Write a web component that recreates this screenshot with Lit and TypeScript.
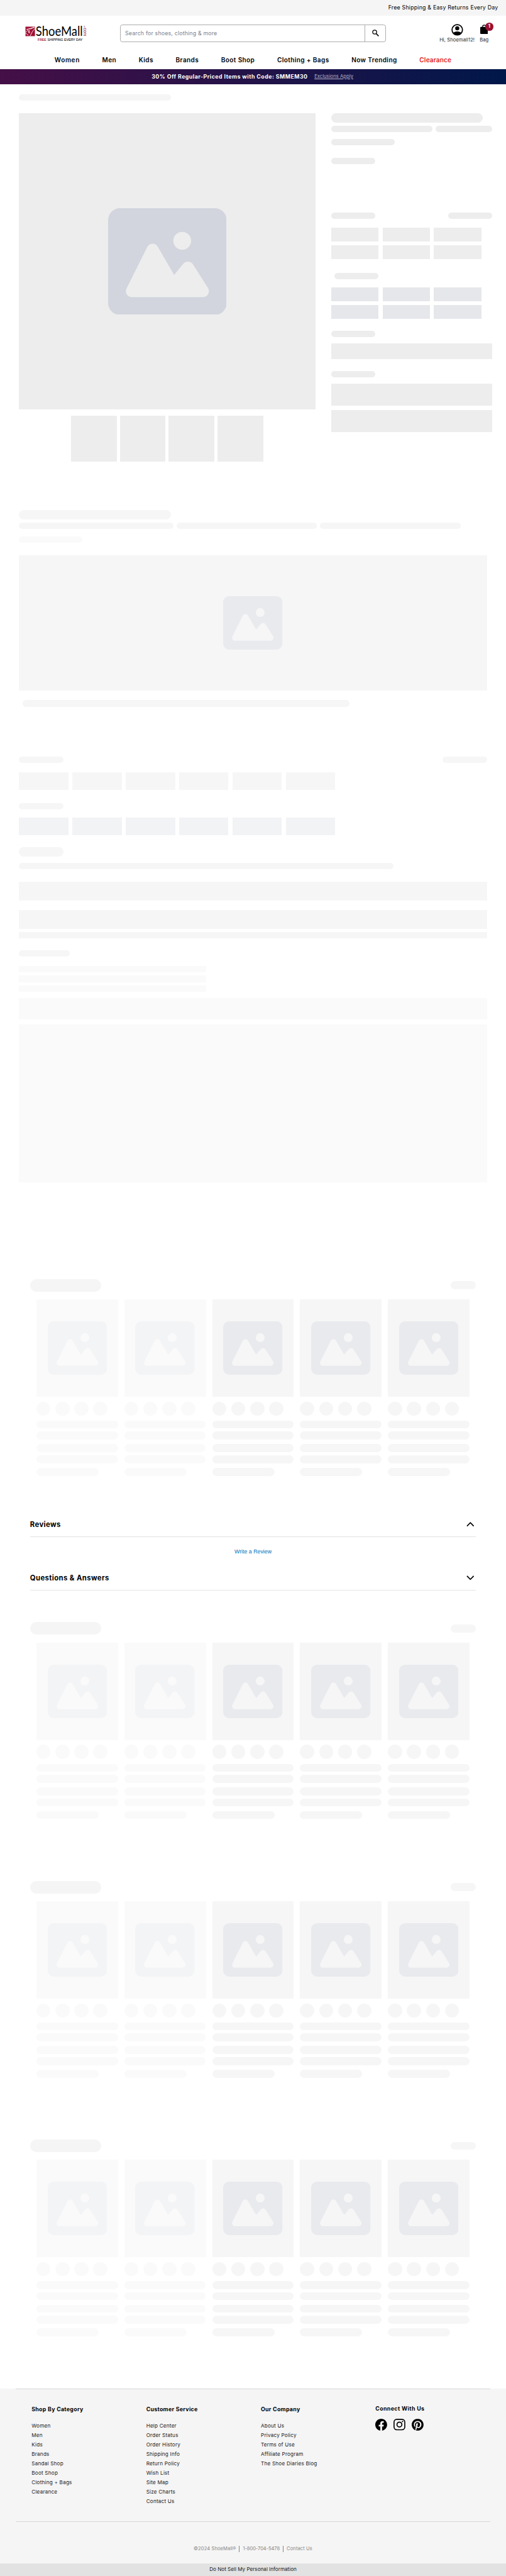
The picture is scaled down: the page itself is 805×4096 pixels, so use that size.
import { LitElement, html, css } from "lit";
import { customElement, property } from "lit/decorators.js";
import { styleMap } from "lit/directives/style-map.js";
import { classMap } from "lit/directives/class-map.js";

/** A row of loading bars: space above, height, bar widths and their look. */
interface Row {
  top: number;
  h: number;
  w: number[];
  gap?: number;
  tone: string;
  round?: boolean;
  indent?: number;
  split?: boolean;
}

const px = (n: number) => `${n}px`;

const skeletonCss = css`
  .row {
    display: flex;
  }
  .split {
    justify-content: space-between;
  }
  .bar {
    flex: none;
  }
  .round {
    border-radius: 99px;
  }
  .t-ed { background: #ededed; }
  .t-e5 { background: #e5e7eb; }
  .t-f5 { background: #f5f5f5; }
  .t-f6 { background: #f6f6f6; }
  .t-f3 { background: #f2f3f5; }
  .t-fa { background: #fafafa; }
`;

const rows = (list: Row[]) =>
  list.map(
    (r) => html`<div
      class=${classMap({ row: true, split: !!r.split })}
      style=${styleMap({ marginTop: px(r.top), gap: px(r.gap ?? 0), paddingLeft: px(r.indent ?? 0) })}
    >
      ${r.w.map(
        (w) => html`<div
          class=${classMap({ bar: true, round: !!r.round, ["t-" + r.tone]: true })}
          style=${styleMap({ width: px(w), height: px(r.h) })}
        ></div>`
      )}
    </div>`
  );

@customElement("image-placeholder")
class ImagePlaceholder extends LitElement {
  @property({ type: Number }) size = 150;
  static styles = css`
    :host {
      display: flex;
      align-items: center;
      justify-content: center;
    }
    svg {
      display: block;
      fill: currentColor;
    }
  `;
  render() {
    return html`<svg viewBox="0 0 20 18" width=${this.size} height=${this.size * 0.9}>
      <path
        d="M18 0H2a2 2 0 0 0-2 2v14a2 2 0 0 0 2 2h16a2 2 0 0 0 2-2V2a2 2 0 0 0-2-2Zm-5.5 4a1.5 1.5 0 1 1 0 3 1.5 1.5 0 0 1 0-3Zm4.376 10.481A1 1 0 0 1 16 15H4a1 1 0 0 1-.895-1.447l3.5-7A1 1 0 0 1 7.468 6a.965.965 0 0 1 .9.5l2.775 4.757 1.546-1.887a1 1 0 0 1 1.618.1l2.541 4a1 1 0 0 1 .028 1.011Z"
      />
    </svg>`;
  }
}

@customElement("product-carousel")
class ProductCarousel extends LitElement {
  static styles = [
    skeletonCss,
    css`
      :host {
        display: block;
        height: 498px;
        padding: 0 76px;
      }
      .head {
        display: flex;
        justify-content: space-between;
        align-items: center;
      }
      .title {
        width: 180px;
        height: 32px;
      }
      .more {
        width: 64px;
        height: 20px;
      }
      .cards {
        display: grid;
        grid-template-columns: repeat(5, 1fr);
        gap: 16px;
        padding: 20px 16px 0;
      }
      .pic {
        height: 246.4px;
        background: #f6f6f6;
        color: #e9eaee;
      }
      .faint .pic {
        background: #fafafa;
        color: #f3f4f6;
      }
      .faint .t-f6 {
        background: #fafafa;
      }
    `,
  ];
  private card(faint: boolean) {
    const line = (top: number, w = 206.4): Row => ({ top, h: 20, w: [w], tone: "f6", round: true });
    return html`<div class=${classMap({ faint })}>
      <image-placeholder class="pic" size="150"></image-placeholder>
      ${rows([
        { top: 12, h: 36, w: [36, 36, 36, 36], gap: 12, tone: "f6", round: true },
        line(12),
        line(8),
        line(12),
        line(8),
        line(12, 157.4),
      ])}
    </div>`;
  }
  render() {
    return html`<div class="head">
        <div class="title round t-f5"></div>
        <div class="more round t-f6"></div>
      </div>
      <div class="cards">${[true, true, false, false, false].map((f) => this.card(f))}</div>`;
  }
}

@customElement("site-header")
class SiteHeader extends LitElement {
  static styles = css`
    :host {
      display: block;
      height: 213px;
      color: #000;
    }
    .ship {
      height: 40px;
      line-height: 38.5px;
      background: #f5f5f5;
      text-align: right;
      padding-right: 20px;
      font-size: 14px;
      letter-spacing: 0.33px;
    }
    .main {
      display: flex;
      height: 88px;
      padding-left: 60px;
    }
    .logo {
      display: block;
      width: 164px;
      height: 60px;
      margin-top: 20px;
    }
    .search {
      box-sizing: border-box;
      display: flex;
      width: 674px;
      height: 44px;
      margin: 22px 0 0 79px;
      border: 1px solid #adadad;
      border-radius: 6px;
    }
    .query {
      flex: 1;
      padding-left: 12px;
      line-height: 42px;
      font-size: 14px;
      letter-spacing: 0.27px;
      color: #7b7f8d;
    }
    .go {
      display: flex;
      align-items: center;
      justify-content: center;
      width: 51px;
      border-left: 1px solid #adadad;
    }
    .user {
      display: flex;
      flex-direction: column;
      align-items: center;
      width: 89px;
      margin: 20px 0 0 135px;
    }
    .bag {
      position: relative;
      display: flex;
      flex-direction: column;
      align-items: center;
      width: 24px;
      margin: 20px 0 0 12px;
    }
    .bag svg {
      margin: 2px 0 4px;
    }
    .badge {
      position: absolute;
      left: 15px;
      top: -2px;
      width: 20px;
      height: 20px;
      border-radius: 50%;
      background: #9b1033;
      color: #fff;
      font: 700 12px/18px Inter, sans-serif;
      text-align: center;
    }
    .cap {
      margin-top: 4px;
      font-size: 12px;
      line-height: 15px;
      letter-spacing: 0.19px;
      white-space: nowrap;
      color: #222;
    }
    nav {
      display: flex;
      justify-content: space-between;
      height: 47px;
      box-sizing: border-box;
      padding: 0 138px;
      font-size: 16px;
      font-weight: 600;
      line-height: 48.5px;
      letter-spacing: 0.6px;
    }
    .women {
      letter-spacing: 1px;
    }
    .sale {
      color: #e3242b;
      letter-spacing: 0.25px;
    }
    .promo {
      display: flex;
      justify-content: center;
      gap: 17px;
      height: 38px;
      padding-right: 3px;
      line-height: 38px;
      color: #fff;
      background: linear-gradient(90deg, #450f47, #00174a);
      font-size: 14px;
      font-weight: 700;
      letter-spacing: 0.74px;
    }
    .terms {
      color: #b9b6ca;
      font-size: 12px;
      font-weight: 400;
      letter-spacing: 0.14px;
      text-decoration: underline;
    }
  `;
  render() {
    return html`
      <div class="ship">Free Shipping &amp; Easy Returns Every Day</div>
      <div class="main">
        <svg class="logo" viewBox="60 60 164 60">
          <rect x="64" y="67" width="24" height="24" fill="#a00f33" />
          <g fill="none" stroke="#fff" stroke-width="1.5" stroke-linecap="round">
            <path d="M67 74c6-2.500 13-2 18-5.500M64.500 81c3.500-1 5-5 6.500-6.500M88 72c-4 4-6 6-8 10.500-1 3-3 5.500-4.500 8" />
            <path d="M64 84c3 .5 4.500 2 6.500 4.500M72.500 77c-1.500 2-.5 5.500 1 6.500 1.500-1.500 1-4 0-7" />
            <path d="M87 69c-4-.5-7 4-13 4" />
          </g>
          <text x="90" y="90.500" font-family="Lato, sans-serif" font-size="33" textLength="119" lengthAdjust="spacingAndGlyphs" fill="#000">ShoeMall</text>
          <text x="211.500" y="69.500" font-family="Inter, sans-serif" font-size="4.500" fill="#a00f33">®</text>
          <text transform="translate(211.500 70) rotate(90)" font-family="Inter, sans-serif" font-size="11.500" textLength="21" lengthAdjust="spacingAndGlyphs" fill="#a00f33">com</text>
          <text x="95" y="103.200" font-family="Liberation Sans, sans-serif" font-size="8.800" font-weight="700" textLength="22" lengthAdjust="spacingAndGlyphs" fill="#a00f33">FREE</text>
          <text x="119.500" y="103.200" font-family="Liberation Sans, sans-serif" font-size="8.800" textLength="89" lengthAdjust="spacingAndGlyphs" fill="#222" stroke="#222" stroke-width=".2">SHIPPING EVERY DAY</text>
        </svg>
        <div class="search">
          <div class="query">Search for shoes, clothing &amp; more</div>
          <div class="go">
            <svg width="18" height="18" viewBox="0 0 18 18" fill="none" stroke="#000" stroke-width="2">
              <circle cx="6.500" cy="6.500" r="5" />
              <path d="M10.500 10.500 16.500 16.500" stroke-width="2.400" />
            </svg>
          </div>
        </div>
        <div class="user">
          <svg width="30" height="30" viewBox="0 0 30 30">
            <circle cx="15" cy="15" r="13.200" fill="none" stroke="#000" stroke-width="2.800" />
            <circle cx="15" cy="11" r="5.200" />
            <path d="M4.200 23.500C6.500 20.600 10.500 19 15 19s8.500 1.600 10.800 4.500A13.800 13.800 0 0 1 15 28.800 13.800 13.800 0 0 1 4.200 23.500Z" />
          </svg>
          <div class="cap">Hi, Shoemall12!</div>
        </div>
        <div class="bag">
          <svg width="20" height="24" viewBox="0 0 20 24">
            <rect y="6" width="20" height="18" rx="2" />
            <path d="M6 8V5.500a4 4 0 0 1 8 0V8" fill="none" stroke="#000" stroke-width="2" />
          </svg>
          <div class="badge">1</div>
          <div class="cap">Bag</div>
        </div>
      </div>
      <nav>
        <span class="women">Women</span><span>Men</span><span>Kids</span><span>Brands</span><span>Boot Shop</span>
        <span>Clothing + Bags</span><span>Now Trending</span><span class="sale">Clearance</span>
      </nav>
      <div class="promo">
        <span>30% Off Regular-Priced Items with Code: SMMEM30</span><span class="terms">Exclusions Apply</span>
      </div>
    `;
  }
}

@customElement("product-skeleton")
class ProductSkeleton extends LitElement {
  static styles = [
    skeletonCss,
    css`
      :host {
        display: flow-root;
        box-sizing: border-box;
        height: 3021px;
        padding: 0 34px 0 48px;
      }
      .hero {
        display: flex;
        gap: 40px;
        height: 1004px;
        margin-top: 32px;
      }
      .gallery {
        width: 750px;
      }
      .photo {
        height: 750px;
        background: #ededed;
        color: #d2d5dd;
      }
      .thumbs {
        display: flex;
        justify-content: center;
      }
      .buy {
        width: 408px;
      }
      .wide {
        height: 343px;
        margin-top: 32px;
        background: #f6f6f6;
        color: #e9eaee;
      }
      .lower {
        width: 1184px;
      }
    `,
  ];
  render() {
    const box = (top: number, tone: string): Row => ({ top, h: 35, w: [120, 120, 120], gap: 10, tone });
    const six = (top: number, tone: string): Row => ({ top, h: 44, w: Array(6).fill(125), gap: 10, tone });
    return html`
      ${rows([{ top: 25, h: 16, w: [384], tone: "f5", round: true }])}
      <div class="hero">
        <div class="gallery">
          <image-placeholder class="photo" size="300"></image-placeholder>
          <div class="thumbs">
            ${rows([{ top: 16, h: 116, w: [116, 116, 116, 116], gap: 8, tone: "ed" }])}
          </div>
        </div>
        <div class="buy">
          ${rows([
            { top: 0, h: 24, w: [384], tone: "ed", round: true },
            { top: 8, h: 16, w: [256, 144], gap: 8, tone: "ed", round: true },
            { top: 18, h: 16, w: [160], tone: "ed", round: true },
            { top: 32, h: 16, w: [112], tone: "ed", round: true },
            { top: 121, h: 16, w: [112, 112], tone: "ed", round: true, split: true },
            box(23, "ed"),
            box(10, "ed"),
            { top: 34, h: 16, w: [112], tone: "ed", round: true, indent: 8 },
            box(21, "e5"),
            box(10, "e5"),
            { top: 30, h: 16, w: [112], tone: "ed", round: true },
            { top: 16, h: 40, w: [408], tone: "ed" },
            { top: 30, h: 16, w: [112], tone: "ed", round: true },
            { top: 16, h: 55, w: [408], tone: "ed" },
            { top: 12, h: 55.5, w: [408], tone: "ed" },
          ])}
        </div>
      </div>
      <div class="lower">
        ${rows([
          { top: 0, h: 24, w: [384], tone: "f6", round: true },
          { top: 8, h: 16, w: [391, 355, 355], gap: 8, tone: "f6", round: true },
          { top: 18, h: 16, w: [160], tone: "fa", round: true },
        ])}
        <image-placeholder class="wide" size="150"></image-placeholder>
        ${rows([
          { top: 24, h: 16, w: [828], tone: "f6", round: true, indent: 8.5 },
          { top: 127, h: 16, w: [112, 112], tone: "f6", round: true, split: true },
          six(23, "f6"),
          { top: 34, h: 16, w: [112], tone: "f6", round: true },
          six(21, "f3"),
          { top: 30, h: 24, w: [112], tone: "f6", round: true },
          { top: 16, h: 16, w: [947], tone: "f6", round: true },
          { top: 32, h: 48, w: [1184], tone: "f6" },
          { top: 24, h: 48, w: [1184], tone: "f6" },
          { top: 8, h: 16, w: [1184], tone: "f6" },
          { top: 30, h: 16, w: [128], tone: "f6", round: true },
          { top: 24, h: 16, w: [474], tone: "fa" },
          { top: 8, h: 16, w: [474], tone: "fa" },
          { top: 8, h: 16, w: [474], tone: "fa" },
          { top: 16, h: 55, w: [1184], tone: "fa" },
          { top: 12, h: 400, w: [1184], tone: "fa" },
        ])}
      </div>
    `;
  }
}

@customElement("review-panels")
class ReviewPanels extends LitElement {
  static styles = css`
    :host {
      display: block;
      box-sizing: border-box;
      height: 370px;
      padding: 77px 76px 0;
    }
    .panel {
      display: flex;
      align-items: center;
      justify-content: space-between;
      box-sizing: border-box;
      height: 78px;
      padding: 15px 5px 0 0;
      border-bottom: 1px solid #e3e3e3;
      font-size: 18px;
      font-weight: 700;
      letter-spacing: 0.64px;
      color: #000;
    }
    .body {
      height: 57px;
      box-sizing: border-box;
      padding-top: 28px;
      text-align: center;
      font: 14px/18px "Liberation Sans", sans-serif;
      color: #0073bb;
    }
    svg {
      fill: none;
      stroke: #000;
      stroke-width: 2.6;
    }
  `;
  render() {
    return html`
      <div class="panel">
        <span>Reviews</span>
        <svg width="20" height="12" viewBox="0 0 20 12"><path d="M1.500 10.500 10 2l8.500 8.500" /></svg>
      </div>
      <div class="body">Write a Review</div>
      <div class="panel">
        <span>Questions &amp; Answers</span>
        <svg width="20" height="12" viewBox="0 0 20 12"><path d="M1.500 1.500 10 10l8.500-8.500" /></svg>
      </div>
    `;
  }
}

@customElement("site-footer")
class SiteFooter extends LitElement {
  static styles = css`
    :host {
      display: block;
      height: 476px;
      background: #f5f5f5;
      color: #000;
    }
    .cols {
      display: grid;
      grid-template-columns: repeat(4, 290px);
      box-sizing: border-box;
      height: 337px;
      margin: 0 40px;
      padding: 42px 0 0 40px;
      border-top: 1px solid #d8d8d8;
      border-bottom: 1px solid #d8d8d8;
    }
    .head {
      height: 20px;
      line-height: 20px;
      font-size: 14px;
      font-weight: 700;
      letter-spacing: 0.48px;
      margin-bottom: 18.5px;
    }
    .link {
      height: 24px;
      line-height: 24px;
      font-size: 13px;
      letter-spacing: 0.32px;
      color: #1c1c1c;
    }
    .social {
      margin-top: -2.5px;
    }
    .social .head {
      margin-bottom: 15px;
      letter-spacing: 0.62px;
    }
    .icons {
      display: flex;
      gap: 16px;
    }
    .legal {
      display: flex;
      justify-content: center;
      box-sizing: border-box;
      height: 105px;
      padding-top: 60px;
      font-size: 12px;
      line-height: 17px;
      color: #858585;
    }
    .legal span {
      height: 16px;
      padding: 0 8px;
      letter-spacing: 0.18px;
    }
    .legal .tel {
      border: solid #858585;
      border-width: 0 1px;
      letter-spacing: -0.1px;
    }
    .privacy {
      height: 34px;
      line-height: 31px;
      text-align: center;
      background: #e2e2e2;
      font-size: 13px;
      letter-spacing: -0.03px;
      color: #222;
    }
  `;
  private col(head: string, links: string[]) {
    return html`<div>
      <div class="head">${head}</div>
      ${links.map((l) => html`<div class="link">${l}</div>`)}
    </div>`;
  }
  render() {
    return html`
      <div class="cols">
        ${this.col("Shop By Category", ["Women", "Men", "Kids", "Brands", "Sandal Shop", "Boot Shop", "Clothing + Bags", "Clearance"])}
        ${this.col("Customer Service", ["Help Center", "Order Status", "Order History", "Shipping Info", "Return Policy", "Wish List", "Site Map", "Size Charts", "Contact Us"])}
        ${this.col("Our Company", ["About Us", "Privacy Policy", "Terms of Use", "Affiliate Program", "The Shoe Diaries Blog"])}
        <div class="social">
          <div class="head">Connect With Us</div>
          <div class="icons">
            <svg width="30" height="30" viewBox="0 0 24 24">
              <path d="M24 12.073c0-6.627-5.373-12-12-12s-12 5.373-12 12c0 5.990 4.388 10.954 10.125 11.854v-8.385H7.078v-3.470h3.047V9.430c0-3.007 1.792-4.669 4.533-4.669 1.312 0 2.686.235 2.686.235v2.953H15.830c-1.491 0-1.956.925-1.956 1.874v2.250h3.328l-.532 3.470h-2.796v8.385C19.612 23.027 24 18.062 24 12.073z" />
            </svg>
            <svg width="30" height="30" viewBox="0 0 30 30">
              <rect x="1.400" y="1.400" width="27.200" height="26.400" rx="7" fill="none" stroke="#000" stroke-width="2.600" />
              <circle cx="15" cy="14.600" r="6.200" fill="none" stroke="#000" stroke-width="2.700" />
              <circle cx="23" cy="6.900" r="1.800" />
            </svg>
            <svg width="30" height="30" viewBox="0 0 24 24">
              <path d="M12.017 0C5.396 0 .029 5.367.029 11.987c0 5.079 3.158 9.417 7.618 11.162-.105-.949-.199-2.403.041-3.439.219-.937 1.406-5.957 1.406-5.957s-.359-.720-.359-1.781c0-1.663.967-2.911 2.168-2.911 1.024 0 1.518.769 1.518 1.688 0 1.029-.653 2.567-.992 3.992-.285 1.193.6 2.165 1.775 2.165 2.128 0 3.768-2.245 3.768-5.487 0-2.861-2.063-4.869-5.008-4.869-3.410 0-5.409 2.562-5.409 5.199 0 1.033.394 2.143.889 2.741.099.120.112.225.085.345-.090.375-.293 1.199-.334 1.363-.053.225-.172.271-.401.165-1.495-.690-2.433-2.878-2.433-4.646 0-3.776 2.748-7.252 7.920-7.252 4.158 0 7.392 2.967 7.392 6.923 0 4.135-2.607 7.462-6.233 7.462-1.214 0-2.354-.629-2.758-1.379l-.749 2.848c-.269 1.045-1.004 2.352-1.498 3.146 1.123.345 2.306.535 3.550.535 6.607 0 11.985-5.365 11.985-11.987C23.970 5.390 18.592.026 11.985.026z" />
            </svg>
          </div>
        </div>
      </div>
      <div class="legal"><span>©2024 ShoeMall®</span><span class="tel">1-800-704-5478</span><span>Contact Us</span></div>
      <div class="privacy">Do Not Sell My Personal Information</div>
    `;
  }
}

@customElement("app-root")
class AppRoot extends LitElement {
  static styles = css`
    :host {
      display: block;
      height: 4096px;
      overflow: hidden;
      background: #fff;
      font-family: Inter, "Open Sans", sans-serif;
    }
    .page {
      zoom: 0.6288;
      min-height: 6515px;
    }
    .more {
      display: grid;
      gap: 156px;
      height: 1938px;
      align-content: start;
    }
  `;
  render() {
    return html`<div class="page">
      <site-header></site-header>
      <product-skeleton></product-skeleton>
      <product-carousel></product-carousel>
      <review-panels></review-panels>
      <div class="more">
        <product-carousel></product-carousel>
        <product-carousel></product-carousel>
        <product-carousel></product-carousel>
      </div>
      <site-footer></site-footer>
    </div>`;
  }
}
